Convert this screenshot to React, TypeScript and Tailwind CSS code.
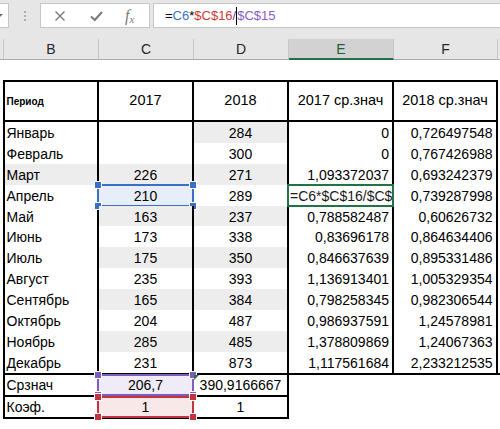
import React from "react";

const FONT = "font-['Liberation_Sans',Arial,sans-serif]";

type Row = {
  b: string;
  c: string;
  d: string;
  e: string;
  f: string;
  gb?: boolean;
  gc?: boolean;
  gd?: boolean;
  edit?: boolean;
  selC?: boolean;
};

const rows: Row[] = [
  { b: "Январь", c: "", d: "284", e: "0", f: "0,726497548", gd: true },
  { b: "Февраль", c: "", d: "300", e: "0", f: "0,767426988" },
  { b: "Март", c: "226", d: "271", e: "1,093372037", f: "0,693242379", gb: true, gc: true, gd: true },
  { b: "Апрель", c: "210", d: "289", e: "", f: "0,739287998", edit: true, selC: true },
  { b: "Май", c: "163", d: "237", e: "0,788582487", f: "0,60626732", gc: true, gd: true },
  { b: "Июнь", c: "173", d: "338", e: "0,83696178", f: "0,864634406" },
  { b: "Июль", c: "175", d: "350", e: "0,846637639", f: "0,895331486", gc: true, gd: true },
  { b: "Август", c: "235", d: "393", e: "1,136913401", f: "1,005329354" },
  { b: "Сентябрь", c: "165", d: "384", e: "0,798258345", f: "0,982306544", gc: true, gd: true },
  { b: "Октябрь", c: "204", d: "487", e: "0,986937591", f: "1,24578981" },
  { b: "Ноябрь", c: "285", d: "485", e: "1,378809869", f: "1,24067363", gc: true, gd: true },
  { b: "Декабрь", c: "231", d: "873", e: "1,117561684", f: "2,233212535" },
];

function Sel({ color }: { color: "blue" | "purple" | "red" | "green" }) {
  const border =
    color === "blue"
      ? "border-[#3a6fc6]"
      : color === "purple"
      ? "border-[#7f5cc0]"
      : color === "red"
      ? "border-[#c23440]"
      : "border-[#217346]";
  const handle =
    color === "blue"
      ? "bg-[#3a6fc6]"
      : color === "purple"
      ? "bg-[#7f5cc0]"
      : "bg-[#c23440]";
  const showHandles = color !== "green";
  return (
    <div
      className={`absolute -left-[2px] -right-[2px] -top-[1px] -bottom-[1px] border-2 ${border} pointer-events-none`}
    >
      {showHandles && (
        <>
          <span className={`absolute -left-[4px] -top-[4px] w-[6px] h-[6px] ${handle} outline outline-1 outline-white`} />
          <span className={`absolute -right-[4px] -top-[4px] w-[6px] h-[6px] ${handle} outline outline-1 outline-white`} />
          <span className={`absolute -left-[4px] -bottom-[4px] w-[6px] h-[6px] ${handle} outline outline-1 outline-white`} />
          <span className={`absolute -right-[4px] -bottom-[4px] w-[6px] h-[6px] ${handle} outline outline-1 outline-white`} />
        </>
      )}
    </div>
  );
}

function ErrTri() {
  return (
    <svg className="absolute left-0 top-0" width="5" height="5" viewBox="0 0 5 5">
      <path d="M0 0H5L0 5Z" fill="#217346" />
    </svg>
  );
}

function Toolbar() {
  return (
    <div className="h-[37px] bg-[#e6e6e6] flex items-start pt-[3px]">
      <div className="w-[9px] h-[25px] bg-white border border-l-0 border-[#c6c6c6] flex items-center">
        <svg width="3" height="3" viewBox="0 0 3 3">
          <path d="M0 0H3L0 3Z" fill="#6b6b6b" />
        </svg>
      </div>
      <div className="ml-[15px] w-[2px] h-[25px] flex flex-col justify-center gap-[2px]">
        <span className="block w-[2px] h-[2px] bg-[#b0b0b0]" />
        <span className="block w-[2px] h-[2px] bg-[#b0b0b0]" />
        <span className="block w-[2px] h-[2px] bg-[#b0b0b0]" />
      </div>
      <div className="ml-[14px] w-[110px] h-[25px] bg-white border border-[#c6c6c6] flex items-center pl-[13px]">
        <svg width="12" height="12" viewBox="0 0 12 12">
          <path d="M1.5 1.5L10.5 10.5M10.5 1.5L1.5 10.5" stroke="#7a7a7a" strokeWidth="1.4" fill="none" />
        </svg>
        <svg className="ml-[24px]" width="13" height="12" viewBox="0 0 13 12">
          <path d="M1 6.5L4.8 10L12 2" stroke="#7a7a7a" strokeWidth="2" fill="none" />
        </svg>
        <span className="ml-[22px] font-['Liberation_Serif',serif] italic text-[#7a7a7a] leading-none flex items-end">
          <span className="text-[16px]">f</span>
          <span className="text-[11px] translate-y-[1px]">x</span>
        </span>
      </div>
      <div className="ml-[3px] flex-1 h-[25px] bg-white border border-r-0 border-[#c6c6c6] flex items-center pl-[11px] text-[13px] whitespace-nowrap">
        <span className="text-black">=</span>
        <span className="text-[#3b73c9]">C6</span>
        <span className="text-black">*</span>
        <span className="text-[#cf3a34]">$C$16</span>
        <span className="text-[#5b3a87]">/</span>
        <span className="inline-block w-[1px] h-[18px] bg-black" />
        <span className="text-[#8a5cc8]">$C$15</span>
      </div>
    </div>
  );
}

function ColHeaders() {
  const base = "h-[21px] border-r border-b border-r-[#c6c6c6] border-b-[#ababab] flex items-center justify-center";
  return (
    <div className="h-[23px] bg-[#e6e6e6] flex pt-[2px] text-[14px] text-[#262626]">
      <div className={`w-[4px] ${base}`} />
      <div className={`w-[95px] ${base}`}>B</div>
      <div className={`w-[95px] ${base}`}>C</div>
      <div className={`w-[95px] ${base}`}>D</div>
      <div className="w-[105px] h-[21px] bg-[#d2d2d2] border-r border-r-[#c6c6c6] border-b-2 border-b-[#217346] flex items-center justify-center text-[#1d5f3b] pt-[1px]">
        E
      </div>
      <div className={`w-[104px] ${base}`}>F</div>
      <div className="flex-1 h-[21px] border-b border-b-[#ababab]" />
    </div>
  );
}

function Table() {
  return (
    <div>
      <div className="ml-[3px] w-[495px] h-[2px] bg-black" />
      <div className="flex h-[38px] text-[14.5px]">
        <div className="w-[3px]" />
        <div className="w-[96px] border-x-2 border-black flex items-center pl-[1.5px] text-[10px] font-bold">
          Период
        </div>
        <div className="w-[95px] border-r-2 border-black flex items-center justify-center">2017</div>
        <div className="w-[95px] border-r-2 border-black flex items-center justify-center">2018</div>
        <div className="w-[105px] border-r-2 border-black flex items-center justify-center">2017 ср.знач</div>
        <div className="w-[104px] border-r-2 border-black flex items-center justify-center">2018 ср.знач</div>
      </div>
      <div className="ml-[3px] w-[495px] h-[2px] bg-black" />
      {rows.map((r) => (
        <div key={r.b} className="flex h-[20.9px] text-[14px]">
          <div className="w-[3px]" />
          <div
            className={`w-[96px] border-x-2 border-black flex items-center pl-[1.5px] pt-[2px] whitespace-nowrap ${
              r.gb ? "bg-[#ededed]" : "bg-white"
            }`}
          >
            {r.b}
          </div>
          <div
            className={`relative w-[95px] border-r-2 border-black flex items-center justify-center pt-[2px] ${
              r.selC ? "bg-[#e7eef9]" : r.gc ? "bg-[#ededed]" : "bg-white"
            }`}
          >
            {r.c}
            {r.selC && <Sel color="blue" />}
          </div>
          <div
            className={`w-[95px] border-r-2 border-black flex items-center justify-center pt-[2px] ${
              r.gd ? "bg-[#ededed]" : "bg-white"
            }`}
          >
            {r.d}
          </div>
          {r.edit ? (
            <div className="relative w-[105px] border-r-2 border-black flex items-center pl-[1px] pt-[2px] overflow-visible">
              <div className="w-full overflow-hidden whitespace-nowrap text-[#1a1a1a]">=C6*$C$16/$C$15</div>
              <Sel color="green" />
            </div>
          ) : (
            <div className="w-[105px] border-r-2 border-black flex items-center justify-end pr-[3px] pt-[2px]">
              {r.e}
            </div>
          )}
          <div className="w-[104px] border-r-2 border-black flex items-center justify-end pr-[3.5px] pt-[2px]">
            {r.f}
          </div>
        </div>
      ))}
      <div className="ml-[3px] h-[2px] bg-black" />
      <div className="flex h-[20px] text-[14px]">
        <div className="w-[3px]" />
        <div className="w-[96px] border-x-2 border-black flex items-center pl-[1.5px] pt-[2px]">Срзнач</div>
        <div className="relative w-[95px] border-r-2 border-black flex items-center justify-center pt-[2px] bg-[#efebf7]">
          206,7
          <Sel color="purple" />
        </div>
        <div className="relative w-[95px] border-r-2 border-black flex items-center justify-center pt-[2px] whitespace-nowrap">
          390,9166667
          <ErrTri />
        </div>
      </div>
      <div className="ml-[3px] w-[286px] h-[2px] bg-black" />
      <div className="flex h-[20px] text-[14px]">
        <div className="w-[3px]" />
        <div className="w-[96px] border-x-2 border-black flex items-center pl-[1.5px] pt-[2px]">Коэф.</div>
        <div className="relative w-[95px] border-r-2 border-black flex items-center justify-center pt-[2px] bg-[#f8e8e8]">
          1
          <Sel color="red" />
        </div>
        <div className="w-[95px] border-r-2 border-black flex items-center justify-center pt-[2px]">1</div>
      </div>
      <div className="ml-[3px] w-[286px] h-[2px] bg-black" />
    </div>
  );
}

export default function App() {
  return (
    <div className={`w-[500px] h-[429px] overflow-hidden bg-white ${FONT} text-black`}>
      <Toolbar />
      <ColHeaders />
      <div className="h-[20px]" />
      <Table />
    </div>
  );
}
